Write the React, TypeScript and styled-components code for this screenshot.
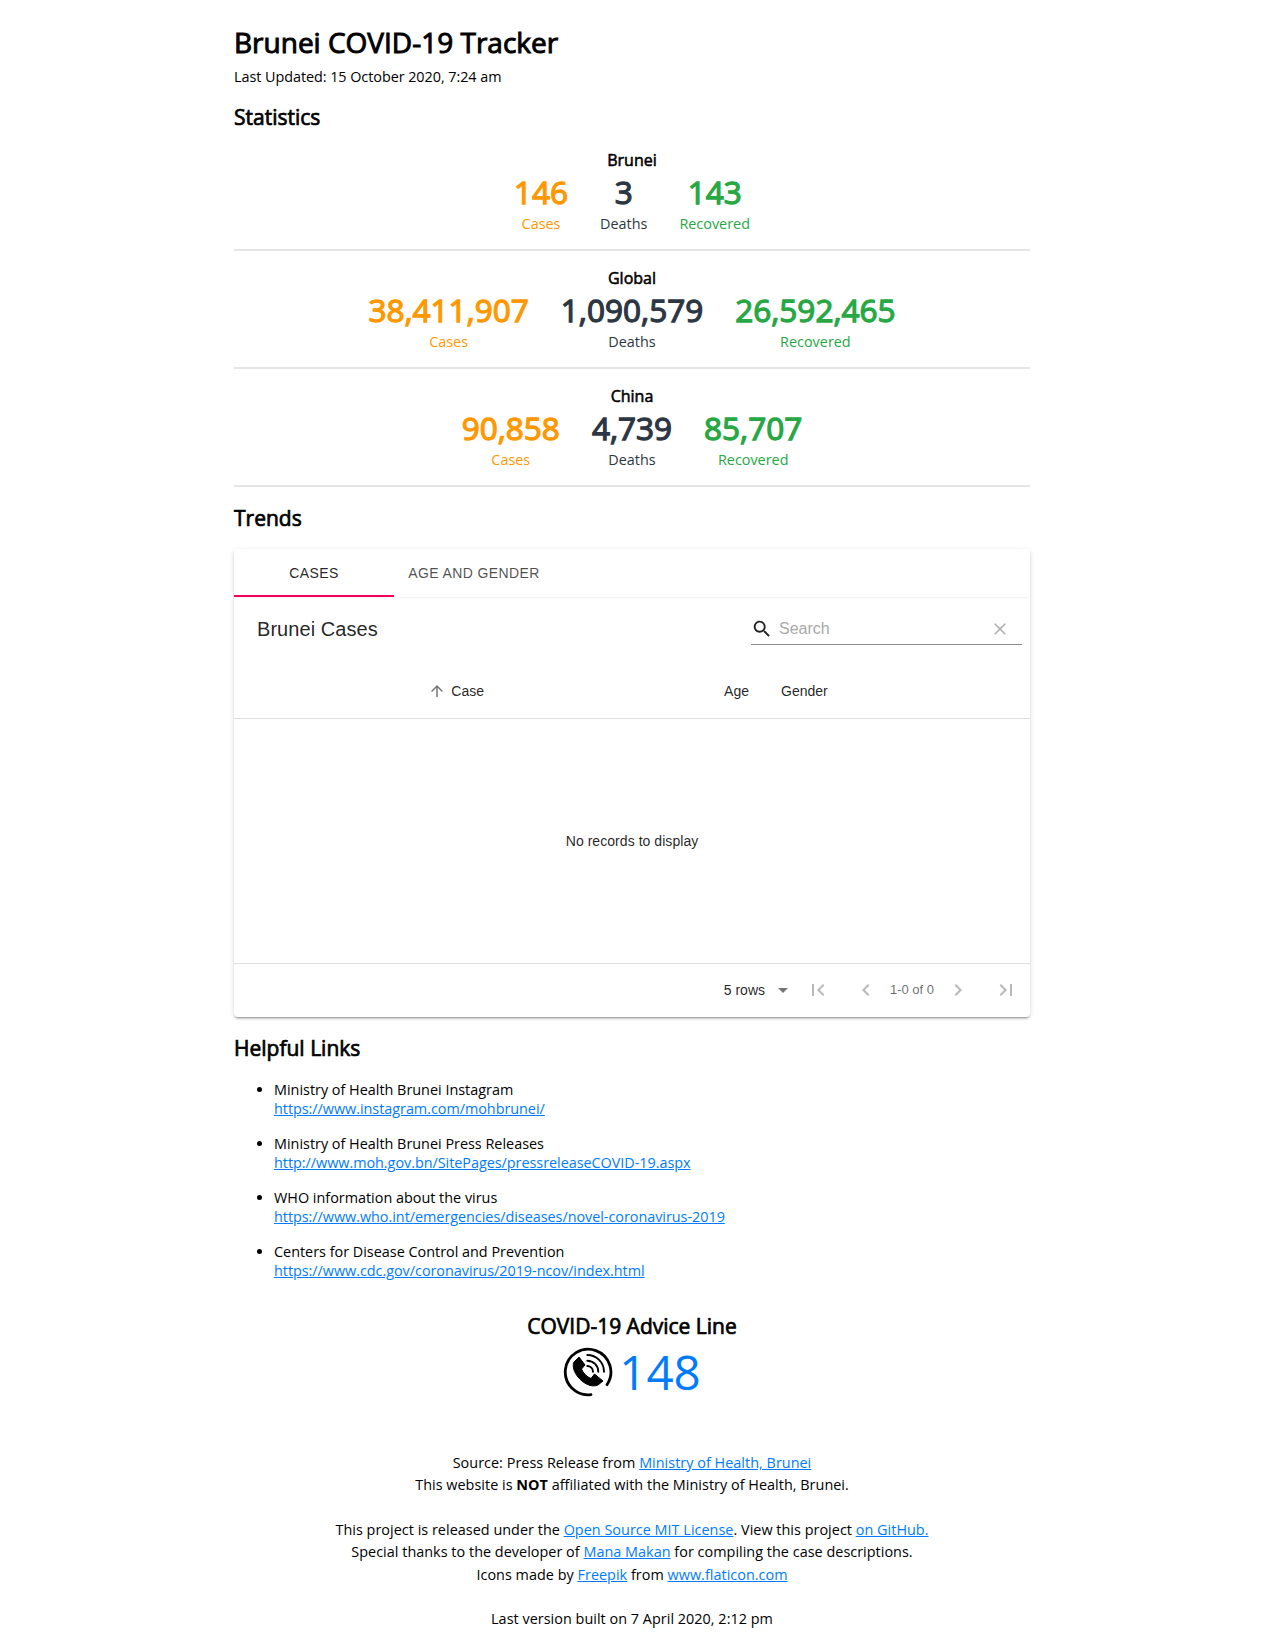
import React from "react";
import styled, { createGlobalStyle } from "styled-components";

const Global = createGlobalStyle`
  html, body { margin: 0; padding: 0; background: #fff; }
  body { font-family: "Open Sans", sans-serif; font-size: 14.4px; line-height: 1.5; color: #000; }
  a { color: #007bff; text-decoration: underline; }
`;

const Page = styled.div`
  width: 796px;
  margin: 0 auto;
  padding-top: 25px;
`;
const Title = styled.h1`
  margin: 0;
  font-size: 28px;
  font-weight: 400;
  -webkit-text-stroke: 0.034em #000;
  line-height: 34px;
`;
const Updated = styled.p`
  margin: 7px 0 0;
  font-size: 14.4px;
  line-height: 21.6px;
  letter-spacing: -0.05px;
`;
const Heading = styled.h2<{ $top: number }>`
  margin: ${(p) => p.$top}px 0 0;
  font-size: 21px;
  font-weight: 400;
  -webkit-text-stroke: 0.034em #000;
  line-height: 26px;
`;
const StatBlock = styled.section<{ $top: number }>`
  margin-top: ${(p) => p.$top}px;
  padding-top: 2px;
  box-sizing: content-box;
  text-align: center;
  height: 100px;
  border-bottom: 2px solid #e5e5e5;
`;
const StatName = styled.div`
  font-size: 16px;
  font-weight: 400;
  -webkit-text-stroke: 0.034em #000;
  line-height: 22px;
`;
const StatRow = styled.div`
  display: flex;
  justify-content: center;
  gap: 32px;
`;
const Stat = styled.div<{ $color: string }>`
  color: ${(p) => p.$color};
  text-align: center;
`;
const StatNumber = styled.div`
  font-size: 31.5px;
  font-weight: 400;
  -webkit-text-stroke: 0.04em currentColor;
  line-height: 41px;
`;
const StatLabel = styled.div`
  margin-top: 1px;
  font-size: 14.4px;
  line-height: 21.6px;
`;

const Card = styled.div`
  margin-top: 18px;
  border-radius: 4px;
  box-shadow: 0 3px 1px -2px rgba(0,0,0,.2), 0 2px 2px 0 rgba(0,0,0,.14), 0 1px 5px 0 rgba(0,0,0,.12);
  font-family: "Liberation Sans", Arial, sans-serif;
  background: #fff;
  height: 468px;
  display: flex;
  flex-direction: column;
`;
const Tabs = styled.div`
  display: flex;
  height: 48px;
  box-shadow: 0 1px 2px rgba(0,0,0,.06);
  border-radius: 4px 4px 0 0;
  flex: none;
`;
const Tab = styled.div<{ $active?: boolean; $w: number }>`
  width: ${(p) => p.$w}px;
  height: 48px;
  box-sizing: border-box;
  padding-top: 4px;
  display: flex;
  align-items: center;
  justify-content: center;
  font-size: 14px;
  letter-spacing: 0.4px;
  color: ${(p) => (p.$active ? "rgba(0,0,0,.87)" : "rgba(0,0,0,.7)")};
  border-bottom: 2px solid ${(p) => (p.$active ? "#f50057" : "transparent")};
`;
const Toolbar = styled.div`
  display: flex;
  align-items: center;
  justify-content: space-between;
  height: 64px;
  padding: 0 8px 0 23px;
  flex: none;
`;
const TableTitle = styled.div`
  font-size: 20px;
  letter-spacing: 0.06px;
  color: rgba(0,0,0,.87);
`;
const Search = styled.div`
  width: 271px;
  height: 32px;
  box-sizing: border-box;
  border-bottom: 1px solid #8c8c8c;
  display: flex;
  align-items: center;
  margin-top: 1px;
  padding-right: 12px;
`;
const SearchText = styled.div`
  flex: 1;
  margin-left: 6px;
  font-size: 16px;
  color: #a9a9a9;
`;
const HeadRow = styled.div`
  display: grid;
  grid-template-columns: 250px 265px 281px;
  height: 58px;
  padding-top: 4px;
  align-items: center;
  border-bottom: 1px solid #e0e0e0;
  font-size: 14px;
  color: rgba(0,0,0,.87);
  flex: none;
  box-sizing: border-box;
`;
const HeadCell = styled.div<{ $right?: boolean; $pad?: number }>`
  display: flex;
  align-items: center;
  gap: 5px;
  padding-left: ${(p) => p.$pad ?? 0}px;
  justify-content: ${(p) => (p.$right ? "flex-end" : "flex-start")};
`;
const Empty = styled.div`
  height: 245px;
  padding-top: 2px;
  box-sizing: border-box;
  display: flex;
  align-items: center;
  justify-content: center;
  font-size: 14px;
  letter-spacing: 0.05px;
  color: rgba(0,0,0,.87);
  border-bottom: 1px solid #e0e0e0;
  flex: none;
`;
const Pager = styled.div`
  flex: 1;
  display: flex;
  align-items: center;
  justify-content: flex-end;
  padding-right: 12px;
`;
const Rows = styled.div`
  font-size: 14px;
  color: rgba(0,0,0,.87);
  margin-right: 6px;
`;
const Count = styled.div`
  font-size: 13px;
  color: rgba(0,0,0,.6);
  width: 68px;
  text-align: center;
`;
const PageBtn = styled.svg<{ $gap?: number }>`
  width: 24px;
  height: 24px;
  fill: rgba(0,0,0,.28);
  flex: none;
  margin-left: ${(p) => p.$gap ?? 0}px;
`;
const Caret = styled.svg`
  width: 24px;
  height: 24px;
  fill: rgba(0,0,0,.54);
  flex: none;
`;
const LinkList = styled.ul`
  margin: 19px 0 0;
  padding: 0 0 0 40px;
`;
const LinkItem = styled.li`
  margin-bottom: 16px;
  line-height: 19px;
`;
const LinkBlock = styled.div``;
const LinkUrl = styled.a`
  letter-spacing: -0.03px;
`;
const Advice = styled.section`
  margin-top: 33px;
  text-align: center;
`;
const AdviceTitle = styled.h3`
  margin: 0;
  font-size: 21px;
  font-weight: 400;
  -webkit-text-stroke: 0.034em #000;
  line-height: 26px;
`;
const Phone = styled.a`
  display: flex;
  justify-content: center;
  align-items: center;
  gap: 6px;
  margin-top: 3px;
  font-size: 47.5px;
  line-height: 60px;
  text-decoration: none;
`;
const Footer = styled.footer`
  margin-top: 50px;
  text-align: center;
  line-height: 22.4px;
  letter-spacing: 0.03px;
`;
const FootPara = styled.p`
  margin: 0 0 22.4px;
`;

const stats = [
  { name: "Brunei", c: "146", d: "3", r: "143" },
  { name: "Global", c: "38,411,907", d: "1,090,579", r: "26,592,465" },
  { name: "China", c: "90,858", d: "4,739", r: "85,707" },
];

const links = [
  ["Ministry of Health Brunei Instagram", "https://www.instagram.com/mohbrunei/"],
  ["Ministry of Health Brunei Press Releases", "http://www.moh.gov.bn/SitePages/pressreleaseCOVID-19.aspx"],
  ["WHO information about the virus", "https://www.who.int/emergencies/diseases/novel-coronavirus-2019"],
  ["Centers for Disease Control and Prevention", "https://www.cdc.gov/coronavirus/2019-ncov/index.html"],
];

export default function App() {
  return (
    <Page>
      <Global />
      <Title>Brunei COVID-19 Tracker</Title>
      <Updated>Last Updated: 15 October 2020, 7:24 am</Updated>
      <Heading $top={16}>Statistics</Heading>
      {stats.map((s, i) => (
        <StatBlock key={s.name} $top={i === 0 ? 17 : 14}>
          <StatName>{s.name}</StatName>
          <StatRow>
            <Stat $color="#ff9800"><StatNumber>{s.c}</StatNumber><StatLabel>Cases</StatLabel></Stat>
            <Stat $color="#2d3743"><StatNumber>{s.d}</StatNumber><StatLabel>Deaths</StatLabel></Stat>
            <Stat $color="#28a745"><StatNumber>{s.r}</StatNumber><StatLabel>Recovered</StatLabel></Stat>
          </StatRow>
        </StatBlock>
      ))}
      <Heading $top={18}>Trends</Heading>
      <Card>
        <Tabs>
          <Tab $active $w={160}>CASES</Tab>
          <Tab $w={160}>AGE AND GENDER</Tab>
        </Tabs>
        <Toolbar>
          <TableTitle>Brunei Cases</TableTitle>
          <Search>
            <svg width="22" height="22" viewBox="0 0 24 24" fill="rgba(0,0,0,.87)"><path d="M15.5 14h-.79l-.28-.27C15.41 12.59 16 11.11 16 9.5 16 5.91 13.09 3 9.5 3S3 5.91 3 9.5 5.91 16 9.5 16c1.61 0 3.09-.59 4.23-1.57l.27.28v.79l5 4.99L20.49 19l-4.99-5zm-6 0C7.01 14 5 11.99 5 9.5S7.01 5 9.5 5 14 7.01 14 9.5 11.99 14 9.5 14z" /></svg>
            <SearchText>Search</SearchText>
            <svg width="20" height="20" viewBox="0 0 24 24" fill="rgba(0,0,0,.3)"><path d="M19 6.41L17.59 5 12 10.59 6.41 5 5 6.41 10.59 12 5 17.59 6.41 19 12 13.41 17.59 19 19 17.59 13.41 12z" /></svg>
          </Search>
        </Toolbar>
        <HeadRow>
          <HeadCell $right>
            <svg width="18" height="18" viewBox="0 0 24 24" fill="rgba(0,0,0,.54)"><path d="M4 12l1.41 1.41L11 7.83V20h2V7.83l5.58 5.59L20 12l-8-8-8 8z" /></svg>
            Case
          </HeadCell>
          <HeadCell $right>Age</HeadCell>
          <HeadCell $pad={32}>Gender</HeadCell>
        </HeadRow>
        <Empty>No records to display</Empty>
        <Pager>
          <Rows>5 rows</Rows>
          <Caret viewBox="0 0 24 24"><path d="M7 10l5 5 5-5z" /></Caret>
          <PageBtn $gap={11} viewBox="0 0 24 24"><path d="M18.41 16.59L13.82 12l4.59-4.59L17 6l-6 6 6 6zM6 6h2v12H6z" /></PageBtn>
          <PageBtn $gap={24} viewBox="0 0 24 24"><path d="M15.41 16.59L10.83 12l4.58-4.59L14 6l-6 6 6 6 1.41-1.41z" /></PageBtn>
          <Count>1-0 of 0</Count>
          <PageBtn viewBox="0 0 24 24"><path d="M8.59 16.59L13.17 12 8.59 7.41 10 6l6 6-6 6-1.41-1.41z" /></PageBtn>
          <PageBtn $gap={24} viewBox="0 0 24 24"><path d="M5.59 7.41L10.18 12l-4.59 4.59L7 18l6-6-6-6zM16 6h2v12h-2z" /></PageBtn>
        </Pager>
      </Card>
      <Heading $top={18}>Helpful Links</Heading>
      <LinkList>
        {links.map(([t, u]) => (
          <LinkItem key={u}>
            <LinkBlock>{t}</LinkBlock>
            <LinkUrl href={u}>{u}</LinkUrl>
          </LinkItem>
        ))}
      </LinkList>
      <Advice>
        <AdviceTitle>COVID-19 Advice Line</AdviceTitle>
        <Phone href="tel:148">
          <svg width="50" height="50" viewBox="0 0 50 50" fill="none">
            <path d="M28 47.6A22.8 22.8 0 1 1 44 37.7" stroke="#000" strokeWidth="2.8" strokeLinecap="round" />
            <path d="M11 15L16 10L22 18L18.5 22C20 26 24 30 28 31.5L31.5 27L40 34L35 38C28 41 20 36 15 30C11 25 9 19 11 15Z" fill="#000" stroke="#000" strokeWidth="1" strokeLinejoin="round" />
            <path d="M24.3 19A5.7 5.7 0 0 1 30 24.7M24.3 13.7A11 11 0 0 1 35.3 24.7M24.3 8A16.7 16.7 0 0 1 41 24.7" stroke="#000" strokeWidth="1.9" strokeLinecap="round" />
          </svg>
          148
        </Phone>
      </Advice>
      <Footer>
        <FootPara>
          Source: Press Release from <a href="#m">Ministry of Health, Brunei</a>
          <br />
          This website is <strong>NOT</strong> affiliated with the Ministry of Health, Brunei.
        </FootPara>
        <FootPara>
          This project is released under the <a href="#l">Open Source MIT License</a>. View this project <a href="#g">on GitHub.</a>
          <br />
          Special thanks to the developer of <a href="#k">Mana Makan</a> for compiling the case descriptions.
          <br />
          Icons made by <a href="#f">Freepik</a> from <a href="#w">www.flaticon.com</a>
        </FootPara>
        <FootPara>Last version built on 7 April 2020, 2:12 pm</FootPara>
      </Footer>
    </Page>
  );
}
